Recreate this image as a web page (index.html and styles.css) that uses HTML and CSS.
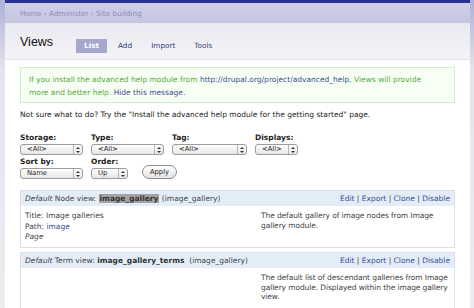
FILE: index.html
```html
<!DOCTYPE html>
<html lang="en-US">
<head>
    <meta name="viewport" content="width=device-width, initial-scale=1.0">
    <link rel="stylesheet" href="styles.css">
    <title>Views</title>
</head>
<body>
<div class="wrapper">
    <div class="breadcrumb">Home › Administer › Site building</div>
    <div class="head">
        <h1>Views</h1>
        <ul class="tabs">
            <li class="active">List</li>
            <li>Add</li>
            <li>Import</li>
            <li>Tools</li>
        </ul>
    </div>

    <div class="content">
        <div class="message">
            If you install the advanced help module from <a href="#">http://drupal.org/project/advanced_help</a>, Views will provide more and better help. <a href="#">Hide this message.</a>
        </div>

        <p class="hint">Not sure what to do? Try the "Install the advanced help module for the getting started" page.</p>

        <div class="filters">
            <div class="field">
                <label>Storage:</label>
                <span class="sel w63"><span class="val">&lt;All&gt;</span><span class="arrows"><svg width="4" height="6" viewBox="0 0 4 6"><path d="M2 0L4 2H0Z M2 6L4 4H0Z" fill="#333"/></svg></span></span>
            </div>
            <div class="field">
                <label>Type:</label>
                <span class="sel w73"><span class="val">&lt;All&gt;</span><span class="arrows"><svg width="4" height="6" viewBox="0 0 4 6"><path d="M2 0L4 2H0Z M2 6L4 4H0Z" fill="#333"/></svg></span></span>
            </div>
            <div class="field">
                <label>Tag:</label>
                <span class="sel w75"><span class="val">&lt;All&gt;</span><span class="arrows"><svg width="4" height="6" viewBox="0 0 4 6"><path d="M2 0L4 2H0Z M2 6L4 4H0Z" fill="#333"/></svg></span></span>
            </div>
            <div class="field">
                <label>Displays:</label>
                <span class="sel w43"><span class="val">&lt;All&gt;</span><span class="arrows"><svg width="4" height="6" viewBox="0 0 4 6"><path d="M2 0L4 2H0Z M2 6L4 4H0Z" fill="#333"/></svg></span></span>
            </div>
        </div>
        <div class="filters">
            <div class="field">
                <label>Sort by:</label>
                <span class="sel w63"><span class="val">Name</span><span class="arrows"><svg width="4" height="6" viewBox="0 0 4 6"><path d="M2 0L4 2H0Z M2 6L4 4H0Z" fill="#333"/></svg></span></span>
            </div>
            <div class="field">
                <label>Order:</label>
                <span class="sel w37"><span class="val">Up</span><span class="arrows"><svg width="4" height="6" viewBox="0 0 4 6"><path d="M2 0L4 2H0Z M2 6L4 4H0Z" fill="#333"/></svg></span></span>
            </div>
            <button type="button" class="apply">Apply</button>
        </div>

        <div class="view">
            <div class="view-head">
                <span><em>Default</em> Node view: <strong class="hl">image_gallery</strong> (image_gallery)</span>
                <span class="links"><a href="#">Edit</a> | <a href="#">Export</a> | <a href="#">Clone</a> | <a href="#">Disable</a></span>
            </div>
            <div class="view-body">
                <div class="info">
                    <div>Title: Image galleries</div>
                    <div>Path: <a href="#">image</a></div>
                    <div><em>Page</em></div>
                </div>
                <div class="desc">The default gallery of image nodes from Image gallery module.</div>
            </div>
        </div>

        <div class="view">
            <div class="view-head">
                <span><em>Default</em> Term view: <strong>image_gallery_terms</strong> &nbsp;(image_gallery)</span>
                <span class="links"><a href="#">Edit</a> | <a href="#">Export</a> | <a href="#">Clone</a> | <a href="#">Disable</a></span>
            </div>
            <div class="view-body">
                <div class="info"></div>
                <div class="desc">The default list of descendant galleries from Image gallery module. Displayed within the image gallery view.</div>
            </div>
        </div>
    </div>
</div>
</body>
</html>
```

FILE: styles.css
```css
* {box-sizing: border-box;}

body {
    margin: 0;
    background: linear-gradient(#aeb0d6, #e4e4ee 70px, #ececf2);
    font-family: "DejaVu Sans", Verdana, sans-serif;
    font-size: 7.5px;
    color: #222;
    height: 308px;
    overflow: hidden;
}

a {
    color: #3b4d92;
    text-decoration: none;
}

/* page box */
.wrapper {
    margin: 0 4px 0 5px;
    border-top: 3px solid #2a3290;
    background: #fff;
    min-height: 305px;
}

.breadcrumb {
    height: 20px;
    padding: 6px 0 0 15px;
    background: linear-gradient(#cfd0e8, #c4c5e0);
    color: #8c8fb6;
    font-size: 7.3px;
}

.head {
    height: 37px;
    display: flex;
    align-items: flex-start;
    padding: 12px 0 0 15px;
    background: linear-gradient(#e9e9f1, #f3f3f7);
    border-bottom: 1px solid #e2e2ea;
}

h1 {
    margin: 0;
    font-family: "Liberation Sans", Arial, sans-serif;
    font-weight: normal;
    font-size: 12.5px;
    color: #111;
    width: 56px;
}

.tabs {
    list-style: none;
    display: flex;
    margin: 4px 0 0 0;
    padding: 0;
}

.tabs li {
    height: 14px;
    line-height: 14px;
    padding: 0 9px;
    margin-right: 1px;
    color: #35417d;
    font-size: 7.3px;
}

.tabs li.active {
    background: #a5a7cd;
    color: #fff;
    font-weight: bold;
    width: 31px;
    padding: 0;
    text-align: center;
    margin-right: 2px;
}

.content {
    padding: 7px 15px 0 15px;
}

/* help message */
.message {
    border: 1px solid #cdf0c6;
    background: #f7fff4;
    color: #56a83a;
    padding: 5px 26px 4px 8px;
    line-height: 13px;
    height: 36px;
}

.hint {
    margin: 6px 0 0 0;
    line-height: 12px;
}

.filters {
    display: flex;
    align-items: flex-end;
    margin-top: 12px;
}

.filters + .filters {
    margin-top: 2px;
}

.field {
    display: flex;
    flex-direction: column;
    margin-right: 8px;
}

.field label {
    font-weight: bold;
    line-height: 10px;
    margin-bottom: 1px;
}

/* fake mac style dropdown */
.sel {
    display: flex;
    height: 11px;
    border: 1px solid #9c9c9c;
    border-radius: 3px;
    background: linear-gradient(#ffffff, #e6e6e6);
    font-size: 6.8px;
    line-height: 9px;
}

.sel .val {
    flex: 1;
    padding-left: 6px;
}

.sel .arrows {
    width: 9px;
    border-left: 1px solid #b4b4b4;
    display: flex;
    align-items: center;
    justify-content: center;
}

.w63 {width: 63px;}
.w73 {width: 73px;}
.w75 {width: 75px;}
.w43 {width: 43px;}
.w37 {width: 37px;}

.apply {
    margin-left: 6px;
    height: 14px;
    width: 35px;
    padding: 0;
    border: 1px solid #8e8e8e;
    border-radius: 7px;
    background: linear-gradient(#ffffff, #e2e2e2);
    font-family: "DejaVu Sans", Verdana, sans-serif;
    font-size: 6.8px;
    color: #222;
}

/* view listing */
.view {
    border: 1px solid #dcdfe8;
    margin-top: 11px;
    color: #444;
}

.view + .view {
    margin-top: 4px;
}

.view-head {
    display: flex;
    justify-content: space-between;
    background: #e2edf8;
    height: 15px;
    line-height: 15px;
    padding: 0 4px;
}

.view-head strong {
    color: #333;
}

.hl {
    background: #a3a3a3;
    padding: 0 1px;
}

.view-body {
    display: flex;
    padding: 5px 3px 0 4px;
    height: 41px;
}

.view + .view .view-body {
    height: 40px;
}

.info {
    width: 236px;
    line-height: 10.7px;
}

.desc {
    flex: 1;
    line-height: 9.7px;
    letter-spacing: -0.1px;
}
```
